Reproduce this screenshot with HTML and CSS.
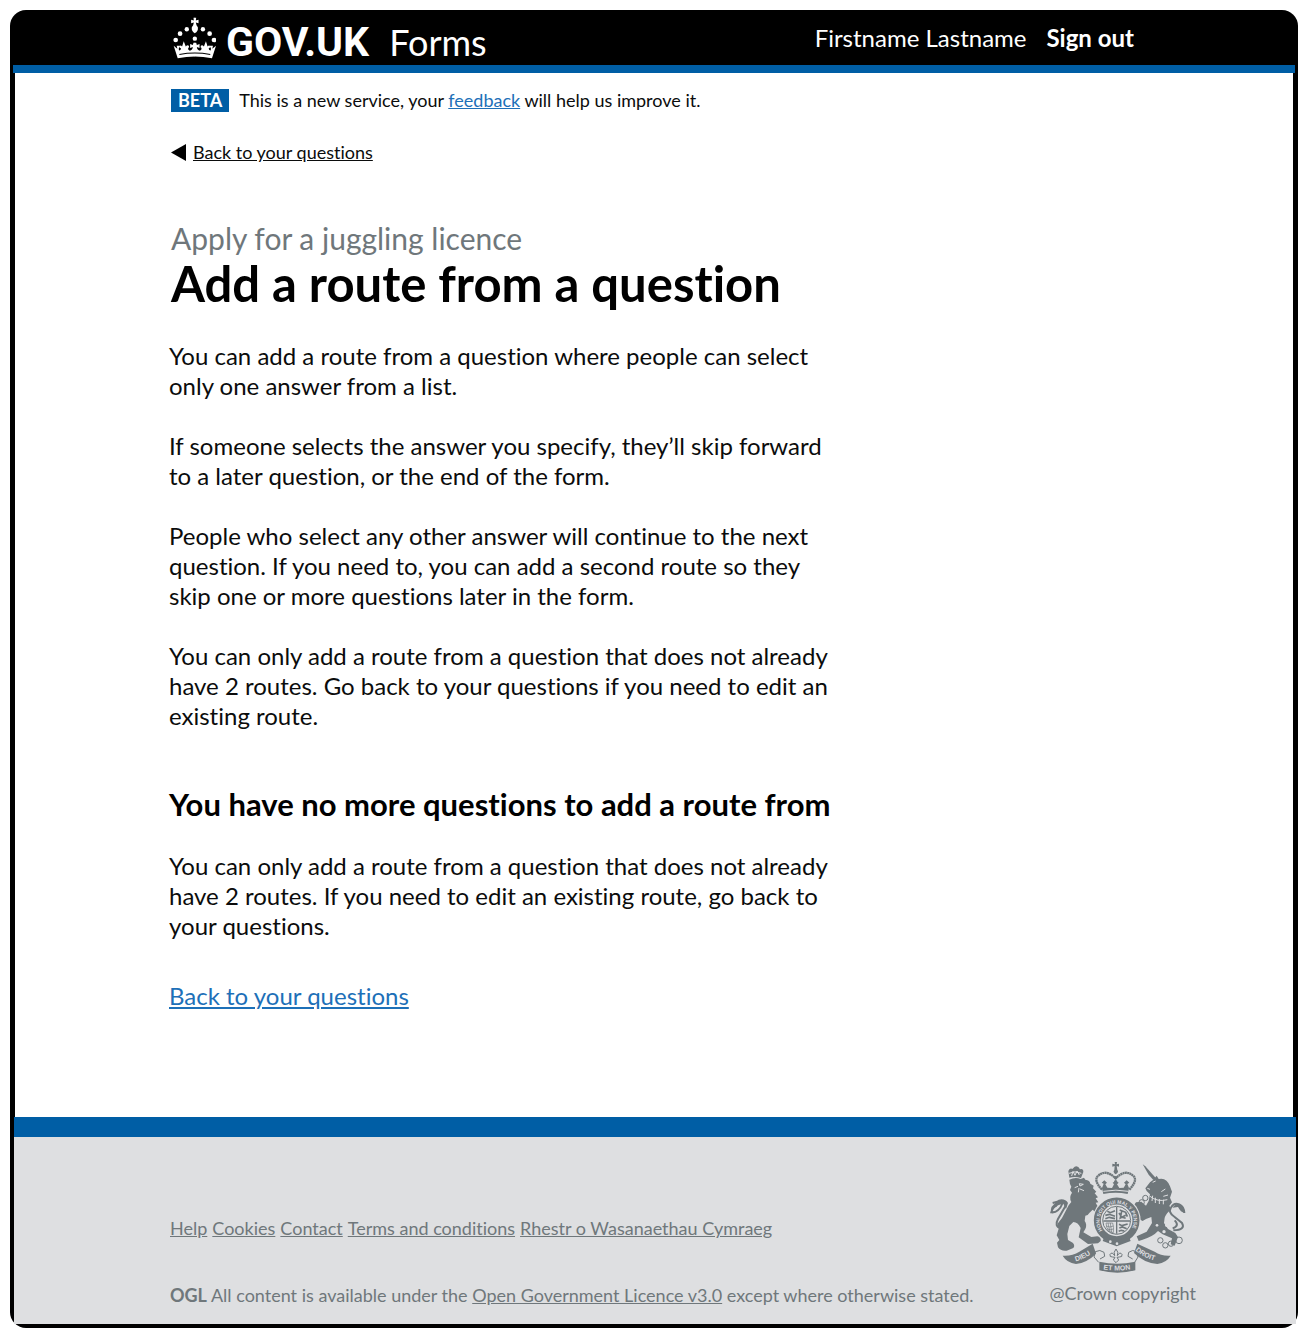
FILE: index.html
```html
<!DOCTYPE html>
<html lang="en">
<head>
<meta charset="utf-8">
<meta name="viewport" content="width=device-width, initial-scale=1">
<title>Add a route from a question – GOV.UK Forms</title>
<link rel="stylesheet" href="styles.css">
</head>
<body>
<div class="frame">
  <header class="header">
    <div class="container header-row">
      <a class="brand" href="#">
        <svg class="crown" viewBox="40 52 128 124" aria-hidden="true">
          <g fill="#fff">
            <g id="crown-half">
              <path d="M105.500 54H101L102 62 94 60V70L102 68 100 76 96 82Q94 94 105.500 100z"/>
              <circle cx="81" cy="88" r="6.5"/>
              <circle cx="61" cy="101" r="7"/>
              <circle cx="48" cy="120" r="7"/>
              <path d="M105.500 128H101L99 135 91 132V144L99 141Q98 151 90 152 84 151 85 144 90 142 87 137 83 134 78 139L72 124 67 139Q62 134 60 139 59 143 64 145 63 151 58 151L57 146 61 137H51L53 146 42 137 54 174Q80 169 105.500 169z"/>
            </g>
            <use href="#crown-half" transform="translate(210 0) scale(-1 1)"/>
            <circle cx="105" cy="116" r="6.5"/>
          </g>
          <path d="M59 163q46-8 92 0" fill="none" stroke="#000" stroke-width="3"/>
        </svg>
        <span class="brand-name">GOV.UK</span>
        <span class="brand-product">Forms</span>
      </a>
      <nav class="account" aria-label="Account">
        <span>Firstname Lastname</span>
        <a class="sign-out" href="#">Sign out</a>
      </nav>
    </div>
  </header>

  <div class="page">
    <div class="container">
      <div class="phase">
        <strong class="tag">BETA</strong>
        <span>This is a new service, your <a class="link" href="#">feedback</a> will help us improve it.</span>
      </div>
      <a class="back" href="#">
        <svg class="back-arrow" viewBox="0 0 15 17" aria-hidden="true"><path d="M0 8.500L15 0V17z"/></svg>
        <span class="back-text">Back to your questions</span>
      </a>
      <main class="content">
        <h1 class="title"><span class="caption">Apply for a juggling licence</span>Add a route from a question</h1>
        <p>You can add a route from a question where people can select<br>only one answer from a list.</p>
        <p>If someone selects the answer you specify, they’ll skip forward<br>to a later question, or the end of the form.</p>
        <p>People who select any other answer will continue to the next<br>question. If you need to, you can add a second route so they<br>skip one or more questions later in the form.</p>
        <p>You can only add a route from a question that does not already<br>have 2 routes. Go back to your questions if you need to edit an<br>existing route.</p>
        <h2 class="subtitle">You have no more questions to add a route from</h2>
        <p>You can only add a route from a question that does not already<br>have 2 routes. If you need to edit an existing route, go back to<br>your questions.</p>
        <a class="link return" href="#">Back to your questions</a>
      </main>
    </div>
  </div>

  <footer class="footer">
    <div class="footer-text">
      <nav class="footer-links" aria-label="Footer">
        <a href="#">Help</a>
        <a href="#">Cookies</a>
        <a href="#">Contact</a>
        <a href="#">Terms and conditions</a>
        <a href="#">Rhestr o Wasanaethau Cymraeg</a>
      </nav>
      <p class="licence"><strong>OGL</strong> All content is available under the <a href="#">Open Government Licence v3.0</a> except where otherwise stated.</p>
    </div>
    <div class="copyright">
      <svg class="crest" viewBox="30 36 408 336" role="img" aria-label="Royal coat of arms">
        <defs>
          <path id="garter" d="M188 244A51 51 0 1 1 272 244"/>
          <path id="scroll-left" d="M107 337Q136 330 166 305"/>
          <path id="scroll-mid" d="M182 360Q231 369 284 359"/>
          <path id="scroll-right" d="M286 304Q316 332 362 338"/>
        </defs>
        <!-- lion -->
        <g fill="#6f777b">
          <path d="M88 86L85 66q5-10 12-6l7-7 5-1 6 2 5 7q10-3 10 8l-7 18q-18-6-35-1z"/>
          <path d="M88 92q18-9 34-2l10-4 4 6q14 2 15 12l10 6-2 8 10 10-5 5 10 12-7 3 8 12-8 1 5 9q14 6 16 20l-12 8-18-16-10 10q-4 8-12 8l-2 16q8 10 2 24l-6 10 24 14 18-2q12 2 10 14l-8 7-30 2-28-20 6-28q-8-18-22-18l-12 12-6 24 2 18 14 8q8 8 2 16l-20 8q-18 2-26-10l-3-14 7-8-8-14 6-20-4-14 14-18 20-38 8-10q-8-14 2-28l-6-8 4-10-4-8z"/>
        </g>
        <path d="M118 104l12 2-10 5zM104 116l10-4M120 120l12 5M117 117l-2 13" fill="none" stroke="#dedfe1" stroke-width="3"/>
        <path d="M87 73q17-9 37 0M95 81l4-14 6 12 6-13 7 12" fill="none" stroke="#dedfe1" stroke-width="3"/>
        <path d="M62 238q-20-6-8-28l22-38q4-18-16-16l-22 6M68 162q-12 30-34 28q4-16 16-20" fill="none" stroke="#6f777b" stroke-width="6"/>
        <path d="M34 190q-5-14 8-24l14-14q20-4 28 10l-6 18-8-16-14 4q-16 8-22 22z" fill="#6f777b"/>
        <!-- unicorn -->
        <path d="M308 46l8 6 32 36-8 5-14-16z" fill="#6f777b"/>
        <g fill="#6f777b">
          <path d="M340 92L350 80 356 90Q380 84 390 112L396 128 390 146 396 160 388 170 394 182Q380 190 374 206L372 222 384 240 406 252 414 264 404 290 392 286 396 268 368 256 354 246Q340 262 308 272L296 276 290 262 320 248 336 222 334 204 318 210 308 216 296 210 294 196 284 184 282 168 288 160 304 158 318 170 326 156 330 136 320 126 316 118 330 100z"/>
        </g>
        <path d="M338 100l9-4M322 118l8 3M330 142q22 18 52 10M338 140l-2 16M346 146v16M358 150v15M370 152v14M376 120l-12 8M384 138l-14 4" fill="none" stroke="#dedfe1" stroke-width="3"/>
        <g fill="none" stroke="#6f777b" stroke-width="3">
          <circle cx="316" cy="147" r="8"/><circle cx="305" cy="160" r="8"/><circle cx="301" cy="174" r="7"/><circle cx="312" cy="190" r="7"/>
          <circle cx="361" cy="274" r="8"/><circle cx="376" cy="289" r="8"/><circle cx="393" cy="284" r="8"/><circle cx="417" cy="274" r="10"/>
        </g>
        <g fill="#dedfe1"><circle cx="382" cy="205" r="6"/><circle cx="380" cy="229" r="5"/><circle cx="372" cy="248" r="5"/><circle cx="351" cy="229" r="4"/></g>
        <path d="M400 244q38-2 26-22l-22-18q-22-14-10-30q8-14 24-8q14 6 15 26M398 238q22-8 6-24" fill="none" stroke="#6f777b" stroke-width="6"/>
        <path d="M398 176q12-18 28-6l8 22q-12-2-20-18z" fill="#6f777b"/>
        <!-- royal crown -->
        <g fill="#6f777b">
          <path d="M224 39h7l-1 7 7-2v9l-7-2 2 12q6 6-5 13q-10-7-4-13l1-12-7 2v-9l8 2z"/>
          <circle cx="227" cy="86" r="5"/><circle cx="227" cy="98" r="5"/>
          <path d="M186 117l5-13-6-3 8-7 8 7-5 5 6 10 14 1 6-11-4-5 9-6 9 6-5 5 7 11 13-1 6-10-5-5 8-7 8 7-6 4 5 12-4 18q-36-8-73 0z"/>
        </g>
        <path d="M186 122Q158 92 176 79Q198 60 227 88Q256 60 278 79Q296 92 268 122" fill="none" stroke="#6f777b" stroke-width="7" stroke-dasharray="6 1"/>
        <path d="M190 127q38-7 75 0" fill="none" stroke="#dedfe1" stroke-width="3"/>
        <!-- garter and shield -->
        <circle cx="230" cy="214" r="72" fill="#dedfe1"/>
        <circle cx="230" cy="214" r="58" fill="none" stroke="#6f777b" stroke-width="21"/>
        <circle cx="230" cy="214" r="42" fill="#dedfe1" stroke="#6f777b" stroke-width="3"/>
        <path d="M230 174v80M190 216h80" stroke="#6f777b" stroke-width="4"/>
        <g fill="none" stroke="#6f777b" stroke-width="5">
          <path d="M202 187l9 4 14-6M196 199l12-3 17 6M196 209l12-4 17 4M237 192l8 12 12 4M239 183l18 7 5 13M245 187l-4 20 16-8"/>
          <path d="M237 226l9 4 17-5M238 237l9-3 13 5M236 247l8-3 9 2"/>
        </g>
        <path d="M198 222q2 28 22 29q2-17-2-29zM204 222l6 27M211 222l4 29M199 231q11 6 21 0M202 240q10 4 18 0" fill="none" stroke="#6f777b" stroke-width="2"/>
        <text class="garter-text" fill="#dedfe1"><textPath href="#garter">HONI SOIT QUI MAL Y PENSE</textPath></text>
        <path d="M194 262l36 14 36-14 6 14-42 16-42-16z" fill="#6f777b"/>
        <circle cx="211" cy="278" r="4" fill="#dedfe1"/><circle cx="231" cy="284" r="4" fill="#dedfe1"/>
        <!-- motto scroll -->
        <path d="M176 340l-14-16 4-16q14-8 26 2l2 12-14 8M284 340l10-16-4-16q-12-8-24 2l-2 12 14 8" fill="#dedfe1" stroke="#6f777b" stroke-width="3"/>
        <path d="M68 320q28 2 50-12l40-24q5 14 10 30-28 28-60 31-28-4-40-25zM392 320q-28 2-48-12l-52-24q-5 14-10 28 30 30 70 33 28-4 40-25z" fill="#6f777b"/>
        <path d="M178 338q53 12 108 0v26q-54 14-108 0z" fill="#6f777b"/>
        <path d="M228 300q-9 10-4 20-8-13-14-4-2 9 8 8l7 1-5 8 8 8 8-8-5-8 7-1q10 1 8-8-6-9-14 4 5-10-4-20z" fill="#dedfe1" stroke="#6f777b" stroke-width="3"/>
        <text class="motto" fill="#dedfe1"><textPath href="#scroll-left">DIEU</textPath></text>
        <text class="motto" fill="#dedfe1"><textPath href="#scroll-mid" startOffset="8">ET MON</textPath></text>
        <text class="motto" fill="#dedfe1"><textPath href="#scroll-right">DROIT</textPath></text>
      </svg>
      <a class="crown-link" href="#">@Crown copyright</a>
    </div>
  </footer>
</div>
</body>
</html>
```
FILE: styles.css
```css
* {
  box-sizing: border-box;
}

body {
  margin: 0;
  padding: 10px 10px 11px;
  background: #fff;
  color: #0b0c0c;
  font-family: Lato, "Liberation Sans", sans-serif;
  font-size: 24px;
  font-variant-ligatures: none;
  line-height: 30px;
}

p,
h1,
h2 {
  margin: 0;
}

.frame {
  padding: 0 5px 4px;
  border-radius: 16px;
  background: #000;
}

.container {
  max-width: 966px;
  margin: 0 auto;
}

.header {
  margin: 0 -2px;
  padding-top: 7px;
  border-bottom: 8px solid #005ea5;
  color: #fff;
}

.header-row {
  display: flex;
  justify-content: space-between;
  height: 48px;
}

.header a {
  color: #fff;
  text-decoration: none;
}

.brand {
  display: flex;
  align-items: baseline;
  line-height: 50px;
}

.crown {
  width: 43px;
  height: 42px;
  margin: 0 10px 0 2px;
  align-self: flex-start;
}

.brand-name {
  margin-right: 20px;
  font-family: Roboto, sans-serif;
  font-size: 41px;
  font-weight: 700;
}

.brand-product {
  font-size: 36px;
}

.account {
  display: flex;
  gap: 20px;
  padding: 6px 3px 0 0;
}

.sign-out {
  font-weight: 700;
}

.page {
  padding: 15px 0 106px;
  background: #fff;
}

.phase {
  display: flex;
  align-items: center;
  gap: 10px;
  font-size: 18px;
  line-height: 24px;
}

.tag {
  padding: 0 7px;
  background: #005ea5;
  color: #fff;
  line-height: 23px;
}

.link {
  color: #1d70b8;
}

.back {
  display: inline-flex;
  align-items: center;
  gap: 7px;
  margin-top: 28px;
  color: #0b0c0c;
  font-size: 18px;
  line-height: 24px;
  text-decoration: none;
}

.back-arrow {
  width: 15px;
  height: 17px;
}

.back-text {
  text-decoration: underline;
}

.content {
  margin: 52px 0 0 -2px;
}

.content p {
  margin-bottom: 30px;
}

.title {
  margin: 0 0 32px 2px;
  color: #000;
  font-size: 49px;
  line-height: 52px;
}

.caption {
  display: block;
  color: #6f777b;
  font-size: 30px;
  font-weight: 400;
  line-height: 38px;
}

.subtitle {
  margin: 58px 0 32px;
  color: #000;
  font-size: 31px;
  line-height: 30px;
}

.return {
  display: inline-block;
  margin-top: 10px;
}

.footer {
  display: flex;
  justify-content: space-between;
  margin: 0 -3px 0 -1px;
  padding: 24px 100px 17px calc(50% - 483px);
  border-top: 20px solid #005ea5;
  background: #dedfe1;
  color: #6f777b;
  font-size: 18px;
  line-height: 24px;
}

.footer a {
  color: #6f777b;
}

.footer-text {
  display: flex;
  flex-direction: column;
  justify-content: flex-end;
  gap: 43px;
}

.footer-links {
  display: flex;
  flex-wrap: wrap;
  gap: 5px;
}

.copyright {
  display: flex;
  flex-direction: column;
  gap: 8px;
  padding-bottom: 2px;
}

.crest {
  width: 136px;
  height: 112px;
}

.footer .crown-link {
  text-decoration: none;
}

.garter-text {
  font-family: "Liberation Sans", sans-serif;
  font-size: 15px;
  font-weight: 700;
}

.motto {
  font-family: "Liberation Sans", sans-serif;
  font-size: 21px;
  font-weight: 700;
}
```
